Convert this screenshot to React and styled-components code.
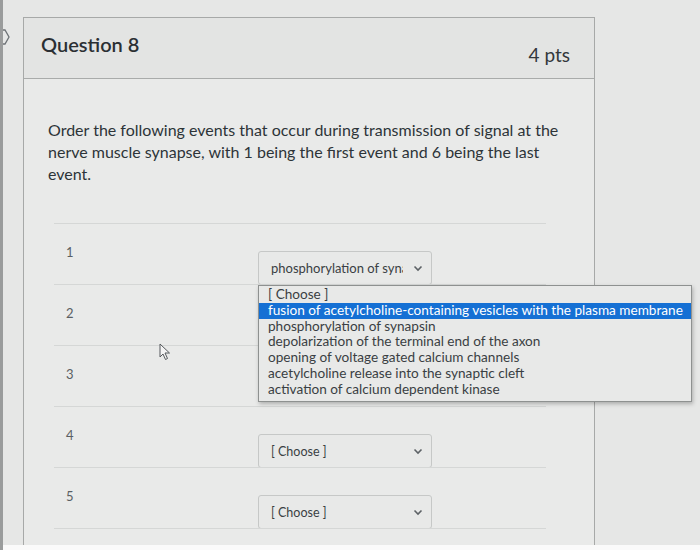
import React from "react";
import styled, { createGlobalStyle } from "styled-components";

const GlobalStyle = createGlobalStyle`
    html, body {
        margin: 0;
        padding: 0;
        background: #e6e7e6;
        font-family: Lato, "Open Sans", "Liberation Sans", sans-serif;
        color: #2d3b45;
    }
`;

const Page = styled.div`
    position: relative;
    height: 550px;
    overflow: hidden;
    padding: 17px 0 0 20px;
    box-sizing: border-box;
    border-left: 3px solid #9a9c9c;
`;

const NavMark = styled.svg`
    position: absolute;
    left: -3px;
    top: 29px;
`;

const BottomStrip = styled.div`
    position: absolute;
    left: 0;
    right: 0;
    bottom: 0;
    height: 5px;
    background: #fafafa;
`;

const Card = styled.div`
    width: 570px;
    background: #e9eae9;
    border: 1px solid #a7a9a8;
    border-bottom: none;
`;

const Header = styled.div`
    height: 60px;
    display: flex;
    align-items: center;
    justify-content: space-between;
    padding: 0 24px 0 17px;
    background: #e3e4e3;
    border-bottom: 1px solid #a9abaa;
`;

const Title = styled.h2`
    margin: 0 0 8px;
    font-size: 20px;
    font-weight: 600;
    color: #2b2f33;
`;

const Points = styled.span`
    margin-top: 12px;
    font-size: 19px;
    color: #33383c;
`;

const Body = styled.div`
    padding: 40px 20px 0 24px;
`;

const Prompt = styled.p`
    margin: 0;
    font-size: 16px;
    line-height: 22px;
    color: #2d3438;
`;

const Answers = styled.div`
    margin: 38px 0 0 6px;
    width: 492px;
    display: flex;
    flex-direction: column;
`;

const Row = styled.div`
    position: relative;
    height: 61px;
    box-sizing: border-box;
    display: grid;
    grid-template-columns: 204px 174px;
    align-items: start;
    padding-top: 20px;
    border-top: 1px solid #d5d7d6;
`;

const Num = styled.span`
    padding-left: 12px;
    font-size: 13px;
    color: #5a5f63;
`;

const Select = styled.div`
    margin-top: 7px;
    height: 34px;
    box-sizing: border-box;
    display: flex;
    align-items: center;
    padding: 0 8px 0 12px;
    background: #e8e9e8;
    border: 1px solid #c6c8c7;
    border-radius: 3px;
    font-size: ${(p) => (p.$small ? "12.5px" : "13px")};
    color: #3a3f43;
`;

const SelectText = styled.span`
    flex: 1;
    white-space: nowrap;
    overflow: hidden;
    text-overflow: clip;
    margin-right: 10px;
`;

const Chevron = () => (
    <svg width="10" height="7" viewBox="0 0 10 7">
        <path d="M1.5 1.5 L5 5 L8.5 1.5" fill="none" stroke="#5d6266" strokeWidth="1.6" />
    </svg>
);

const Dropdown = styled.ul`
    position: absolute;
    left: 204px;
    top: 61px;
    width: 432px;
    margin: 0;
    padding: 1px 0 3px;
    list-style: none;
    background: #e8e9e8;
    border: 1px solid #8e9190;
    box-shadow: 1px 2px 4px rgba(0, 0, 0, 0.25);
    z-index: 5;
`;

const Option = styled.li`
    height: 15.8px;
    line-height: 15.8px;
    padding: 0 0 0 9px;
    font-size: 13.6px;
    white-space: nowrap;
    color: ${(p) => (p.$active ? "#ffffff" : "#3a3f43")};
    background: ${(p) => (p.$active ? "#1570d4" : "transparent")};
`;

const Cursor = styled.svg`
    position: absolute;
    left: 156px;
    top: 343px;
    z-index: 6;
`;

const options = [
    "[ Choose ]",
    "fusion of acetylcholine-containing vesicles with the plasma membrane",
    "phosphorylation of synapsin",
    "depolarization of the terminal end of the axon",
    "opening of voltage gated calcium channels",
    "acetylcholine release into the synaptic cleft",
    "activation of calcium dependent kinase",
];

const rows = [
    { n: 1, value: "phosphorylation of synapsin", open: true },
    { n: 2 },
    { n: 3 },
    { n: 4, value: "[ Choose ]" },
    { n: 5, value: "[ Choose ]" },
    { n: 6 },
];

export default function App() {
    return (
        <>
            <GlobalStyle />
            <Page>
                <NavMark width="10" height="16" viewBox="0 0 10 16">
                    <path d="M0 1 L5 1 L9 8 L5 15 L0 15" fill="none" stroke="#6d7276" strokeWidth="1.3" />
                </NavMark>
                <Card>
                    <Header>
                        <Title>Question 8</Title>
                        <Points>4 pts</Points>
                    </Header>
                    <Body>
                        <Prompt>
                            Order the following events that occur during transmission of signal at the nerve muscle synapse, with 1 being the first event and 6 being the last event.
                        </Prompt>
                        <Answers>
                            {rows.map((r) => (
                                <Row key={r.n}>
                                    <Num>{r.n}</Num>
                                    {r.value && (
                                        <Select $small={r.value === "[ Choose ]"}>
                                            <SelectText>{r.value}</SelectText>
                                            <Chevron />
                                        </Select>
                                    )}
                                    {r.open && (
                                        <Dropdown>
                                            {options.map((o, i) => (
                                                <Option key={o} $active={i === 1}>
                                                    {o}
                                                </Option>
                                            ))}
                                        </Dropdown>
                                    )}
                                </Row>
                            ))}
                        </Answers>
                    </Body>
                </Card>
                <Cursor width="12" height="18" viewBox="0 0 12 18">
                    <path d="M1 1 L1 14 L4 11 L6.5 16.5 L8.5 15.5 L6 10 L10.5 10 Z" fill="#f4f4f4" stroke="#55595c" strokeWidth="1" strokeLinejoin="round" />
                </Cursor>
                <BottomStrip />
            </Page>
        </>
    );
}
